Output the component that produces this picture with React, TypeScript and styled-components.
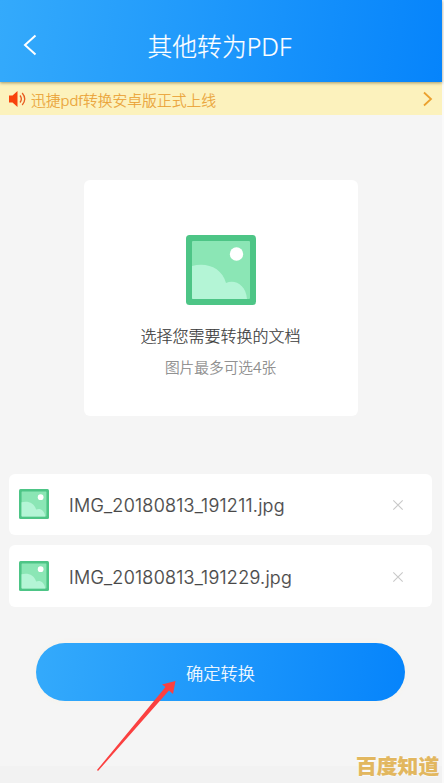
import React from 'react';
import styled, { createGlobalStyle } from 'styled-components';

const GlobalStyle = createGlobalStyle`
  * { box-sizing: border-box; }
  body { margin: 0; background: #fafafa; overflow: hidden; }
  button { font: inherit; border: 0; padding: 0; background: none; cursor: pointer; }
  svg { display: block; flex: none; }
`;

const Screen = styled.div`
  position: relative;
  width: 442px;
  height: 783px;
  display: flex;
  flex-direction: column;
  background: linear-gradient(#f5f5f5 766px, #f2f2f2 766px);
  font-family: "Noto Sans", "Noto Sans CJK SC", sans-serif;
  font-weight: 300;
  -webkit-text-stroke: 0.2px currentColor;
`;

const Header = styled.header`
  z-index: 1;
  flex: none;
  height: 82px;
  padding: 10px 22px 0;
  display: grid;
  grid-template-columns: 24px 1fr 24px;
  align-items: center;
  background: linear-gradient(97deg, #34aafb, #0684fb);
  box-shadow: 0 1px 3px rgba(100, 90, 50, 0.6);
`;

const BackButton = styled.button`
  margin-top: -2px;
`;

const Title = styled.h1`
  margin: 0 3px 0 0;
  text-align: center;
  color: #fff;
  font-size: 24.8px;
  font-weight: 300;
  line-height: 34px;
  white-space: nowrap;
`;

const Notice = styled.div`
  flex: none;
  height: 33px;
  padding: 1px 9px 0 8px;
  display: flex;
  align-items: center;
  background: #fcf2bd;
  color: #eaa133;
`;

const NoticeText = styled.span`
  flex: 1;
  margin: 1px 0 0 5px;
  font-size: 14.8px;
  line-height: 22px;
`;

const PickerCard = styled.section`
  flex: none;
  width: 274px;
  height: 236px;
  margin: 65px 0 0 83.5px;
  padding-top: 55px;
  display: flex;
  flex-direction: column;
  align-items: center;
  border-radius: 6px;
  background: #fff;
`;

const PickerTitle = styled.p`
  margin: 19px 0 0;
  color: #3c3c3c;
  font-size: 16px;
  line-height: 24px;
`;

const PickerHint = styled.p`
  margin: 9px 0 0;
  color: #858585;
  font-size: 14.7px;
  line-height: 20px;
`;

const FileList = styled.ul`
  flex: none;
  list-style: none;
  margin: 57.5px 10px 0 9px;
  padding: 0;
  display: flex;
  flex-direction: column;
  gap: 10px;
`;

const FileRow = styled.li`
  height: 61.5px;
  padding: 0 28px 0 10px;
  display: flex;
  align-items: center;
  border-radius: 6px;
  background: #fff;
`;

const FileName = styled.span`
  flex: 1;
  margin: 4px 0 0 20px;
  color: #484848;
  font-family: Inter, sans-serif;
  font-size: 18px;
  font-weight: 300;
  letter-spacing: 0.25px;
  line-height: 24px;
`;

const RemoveButton = styled.button`
  margin-top: 2px;
`;

const ConvertButton = styled.button`
  && {
    flex: none;
    width: 369px;
    height: 58px;
    margin: 36.4px 0 0 36px;
    padding-top: 1px;
    border-radius: 29px;
    background: linear-gradient(97deg, #34aafb, #0684fb);
    box-shadow: 0 0 5px 1px #f7f3ea;
    color: #fff;
    font-size: 17.2px;
  }
`;

const Pointer = styled.svg`
  position: absolute;
  left: 96px;
  top: 680px;
`;

const Watermark = styled.div`
  position: absolute;
  left: 356px;
  top: 750px;
  color: #e2b75f;
  font-family: "Noto Sans CJK SC", sans-serif;
  font-size: 20.8px;
  font-weight: 900;
  line-height: 30px;
  white-space: nowrap;
  text-shadow: 0 0 2px #fff, 0 0 2px #fff;
`;

const PictureIcon = ({ size }: { size: number }) => (
  <svg width={size} height={size} viewBox="0 0 70 70">
    <rect width="70" height="70" rx="3.5" fill="#4dc586" />
    <rect x="6" y="6" width="58" height="58" rx="1" fill="#8be6b5" />
    <path d="M6 31C21 27 36 33 40 48C49 44 60 50 61 64H7Q6 64 6 63Z" fill="#b4f5d6" />
    <circle cx="50.5" cy="19" r="6.7" fill="#fff" />
  </svg>
);

const BackIcon = () => (
  <svg width="16" height="22" viewBox="0 0 16 22" fill="none" stroke="#fff" strokeWidth="2">
    <path d="M13.5 1.5L3 11L13.5 20.5" />
  </svg>
);

const SpeakerIcon = () => (
  <svg width="18" height="18" viewBox="0 0 18 18">
    <path d="M1 5.5H4.5L9.5 1V17L4.5 12.5H1Z" fill="#f8420c" />
    <path d="M12 5.5Q14.7 9 12 12.5M14.2 3Q19.3 9 14.2 15" fill="none" stroke="#e85b20" strokeWidth="1.3" />
  </svg>
);

const ForwardIcon = () => (
  <svg width="10" height="16" viewBox="0 0 10 16" fill="none" stroke="#eba12f" strokeWidth="1.8">
    <path d="M1 1.5L8 8L1 14.5" />
  </svg>
);

const RemoveIcon = () => (
  <svg width="12" height="12" viewBox="0 0 12 12" stroke="#c9c9c9" strokeWidth="1.1">
    <path d="M1.3 1.3L10.7 10.7M10.7 1.3L1.3 10.7" />
  </svg>
);

const files = ['IMG_20180813_191211.jpg', 'IMG_20180813_191229.jpg'];

export default function App() {
  return (
    <>
      <GlobalStyle />
      <Screen>
        <Header>
          <BackButton aria-label="返回"><BackIcon /></BackButton>
          <Title>其他转为PDF</Title>
        </Header>
        <Notice>
          <SpeakerIcon />
          <NoticeText>迅捷pdf转换安卓版正式上线</NoticeText>
          <ForwardIcon />
        </Notice>
        <PickerCard>
          <PictureIcon size={70} />
          <PickerTitle>选择您需要转换的文档</PickerTitle>
          <PickerHint>图片最多可选4张</PickerHint>
        </PickerCard>
        <FileList>
          {files.map((name) => (
            <FileRow key={name}>
              <PictureIcon size={30} />
              <FileName>{name}</FileName>
              <RemoveButton aria-label="删除"><RemoveIcon /></RemoveButton>
            </FileRow>
          ))}
        </FileList>
        <ConvertButton>确定转换</ConvertButton>
        <Pointer width="82" height="92" viewBox="0 0 82 92" fill="#fb4040">
          <path d="M1 90L69.5 7L66 4.5L79.5 1L77 14L73 10.5L2 91Z" />
        </Pointer>
        <Watermark>百度知道</Watermark>
      </Screen>
    </>
  );
}
